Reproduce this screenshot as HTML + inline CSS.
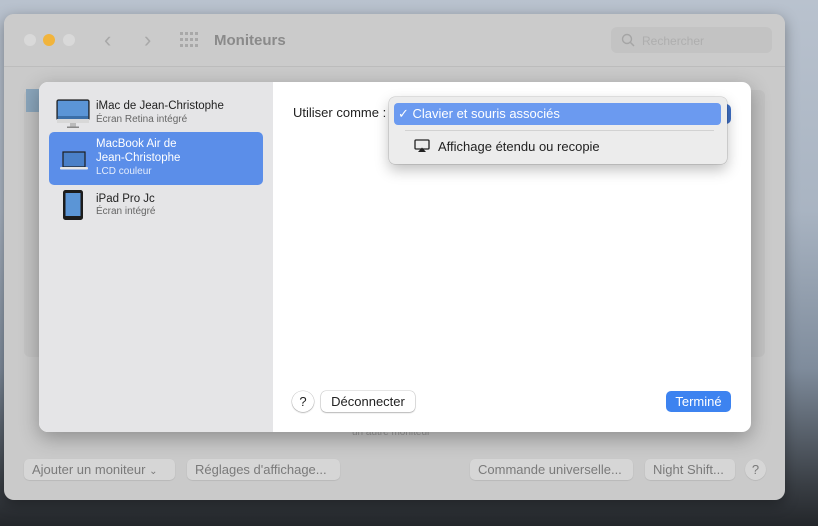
<!DOCTYPE html>
<html><head><meta charset="utf-8"><style>
*{margin:0;padding:0;box-sizing:border-box}
body{width:818px;height:526px;overflow:hidden;position:relative;font-family:"Liberation Sans",sans-serif;
background:linear-gradient(180deg,#b9c2ce 0%,#a9b4c2 40%,#7f8c9c 70%,#3a3f45 92%,#23262a 100%);}
.abs{position:absolute;white-space:nowrap}
.win{left:4px;top:14px;width:781px;height:486px;background:#cacaca;border-radius:10px;box-shadow:0 4px 14px rgba(0,0,0,.35)}
.tb{left:4px;top:14px;width:781px;height:53px;border-bottom:1px solid #bdbdbd;border-radius:10px 10px 0 0;background:#cbcbcb}
.dot{width:12px;height:12px;border-radius:50%;top:34px}
.btn{background:#d6d6d6;border-radius:5px;color:#7a7a7a;font-size:13px;height:21px;line-height:21px;padding:0 8px;box-shadow:0 .5px 1px rgba(0,0,0,.15);overflow:hidden}
.sheet{left:39px;top:82px;width:712px;height:350px;background:#fff;border-radius:9px;box-shadow:0 6px 20px rgba(0,0,0,.3);overflow:hidden}
.side{left:0;top:0;width:234px;height:350px;background:#e5e5e7}
.t1{font-size:11.5px;color:#222}
.t2{font-size:10px;color:#666}
.wb{background:#fff;border-radius:5px;box-shadow:0 0 0 .5px rgba(0,0,0,.2),0 1px 1.5px rgba(0,0,0,.2);font-size:13px;color:#222;height:21px;line-height:21px}
</style></head><body>
<div class="abs win"></div>
<div class="abs tb"></div>
<div class="abs dot" style="left:24px;background:#d9d9d9"></div>
<div class="abs dot" style="left:43px;background:#f1b43c"></div>
<div class="abs dot" style="left:63px;background:#d9d9d9"></div>
<div class="abs" style="left:104px;top:27px;font-size:22px;color:#a8a8a8">&#8249;</div>
<div class="abs" style="left:144px;top:27px;font-size:22px;color:#a8a8a8">&#8250;</div>
<svg class="abs" style="left:180px;top:32px" width="18" height="16"><g fill="#a8a8a8"><rect x="0" y="0" width="3" height="3"/><rect x="5" y="0" width="3" height="3"/><rect x="10" y="0" width="3" height="3"/><rect x="15" y="0" width="3" height="3"/><rect x="0" y="6" width="3" height="3"/><rect x="5" y="6" width="3" height="3"/><rect x="10" y="6" width="3" height="3"/><rect x="15" y="6" width="3" height="3"/><rect x="0" y="12" width="3" height="3"/><rect x="5" y="12" width="3" height="3"/><rect x="10" y="12" width="3" height="3"/><rect x="15" y="12" width="3" height="3"/></g></svg>
<div class="abs" style="left:214px;top:32px;font-size:15px;font-weight:bold;color:#8a8a8a">Moniteurs</div>
<div class="abs" style="left:611px;top:27px;width:161px;height:26px;background:#c3c3c3;border-radius:6px"></div>
<svg class="abs" style="left:621px;top:33px" width="14" height="14"><circle cx="6" cy="6" r="4.5" stroke="#a5a5a5" stroke-width="1.4" fill="none"/><path d="M9.5 9.5L13 13" stroke="#a5a5a5" stroke-width="1.5"/></svg>
<div class="abs" style="left:642px;top:34px;font-size:12px;color:#aeaeae">Rechercher</div>
<div class="abs" style="left:24px;top:90px;width:741px;height:267px;background:#c3c3c3;border-radius:6px"></div>
<div class="abs" style="left:26px;top:89px;width:14px;height:23px;background:#8aa5bb"></div>
<div class="abs" style="left:352px;top:427px;font-size:10px;color:#9a9a9a">un autre moniteur</div>
<div class="abs btn" style="left:24px;top:459px;width:151px">Ajouter un moniteur <span style="font-size:10px">&#8964;</span></div>
<div class="abs btn" style="left:187px;top:459px;width:153px">Réglages d'affichage...</div>
<div class="abs btn" style="left:470px;top:459px;width:163px">Commande universelle...</div>
<div class="abs btn" style="left:645px;top:459px;width:90px">Night Shift...</div>
<div class="abs btn" style="left:745px;top:459px;width:21px;border-radius:50%;padding:0;text-align:center">?</div>

<div class="abs sheet">
 <div class="abs side"></div>
 <div class="abs" style="left:10px;top:50px;width:214px;height:53px;background:#5b8ee9;border-radius:5px"></div>
 <svg class="abs" style="left:17px;top:17px" width="34" height="30"><rect x="1" y="1" width="32" height="20" rx="1.5" fill="#3b6fa8" stroke="#222" stroke-width="1.2"/><rect x="2" y="2" width="30" height="15" fill="#5b95d6"/><rect x="1" y="20" width="32" height="4" fill="#d8d8d8"/><rect x="14" y="24" width="6" height="4" fill="#bbb"/><rect x="11" y="27.5" width="12" height="1.5" fill="#888"/></svg>
 <div class="abs t1" style="left:57px;top:18px">iMac de Jean-Christophe</div>
 <div class="abs t2" style="left:57px;top:32px">Écran Retina intégré</div>
 <svg class="abs" style="left:20px;top:68px" width="30" height="22"><rect x="4" y="2" width="22" height="15" fill="#4a80c8" stroke="#1d1d1d" stroke-width="1.2"/><rect x="1" y="17" width="28" height="2.5" rx="1" fill="#e6e6e6"/></svg>
 <div class="abs t1" style="left:57px;top:56px;color:#fff">MacBook Air de</div>
 <div class="abs t1" style="left:57px;top:70px;color:#fff">Jean-Christophe</div>
 <div class="abs t2" style="left:57px;top:84px;color:#e4ecfb">LCD couleur</div>
 <svg class="abs" style="left:23px;top:107px" width="22" height="32"><rect x="1" y="1" width="20" height="30" rx="2.5" fill="#1c1c1c"/><rect x="3.5" y="4" width="15" height="23" fill="#5b95d6"/></svg>
 <div class="abs t1" style="left:57px;top:111px">iPad Pro Jc</div>
 <div class="abs t2" style="left:57px;top:124px">Écran intégré</div>

 <div class="abs" style="left:254px;top:23px;font-size:13px;color:#222">Utiliser comme :</div>
 <div class="abs" style="left:680px;top:22px;width:12px;height:20px;background:#3f6fc4;border-radius:0 5px 5px 0"></div>
 <div class="abs wb" style="left:253px;top:309px;width:22px;border-radius:50%;text-align:center">?</div>
 <div class="abs wb" style="left:282px;top:309px;width:94px;text-align:center">Déconnecter</div>
 <div class="abs" style="left:627px;top:309px;width:65px;height:21px;line-height:21px;background:#3d83f0;border-radius:5px;color:#fff;font-size:13px;text-align:center">Terminé</div>
</div>

<div class="abs" style="left:389px;top:97px;width:338px;height:67px;background:#ececec;border-radius:6px;box-shadow:0 0 0 .5px rgba(0,0,0,.2),0 6px 14px rgba(0,0,0,.25)"></div>
<div class="abs" style="left:394px;top:103px;width:327px;height:22px;background:#6b9af0;border-radius:4px"></div>
<div class="abs" style="left:398px;top:106px;font-size:13px;color:#fff">✓ Clavier et souris associés</div>
<div class="abs" style="left:405px;top:130px;width:309px;height:1px;background:#d2d2d2"></div>
<svg class="abs" style="left:414px;top:139px" width="16" height="14"><rect x="1" y="1" width="14" height="9" rx="1" fill="none" stroke="#222" stroke-width="1.3"/><path d="M4 13L8 8.5L12 13Z" fill="#222"/></svg>
<div class="abs" style="left:438px;top:139px;font-size:13px;color:#222">Affichage étendu ou recopie</div>
</body></html>
